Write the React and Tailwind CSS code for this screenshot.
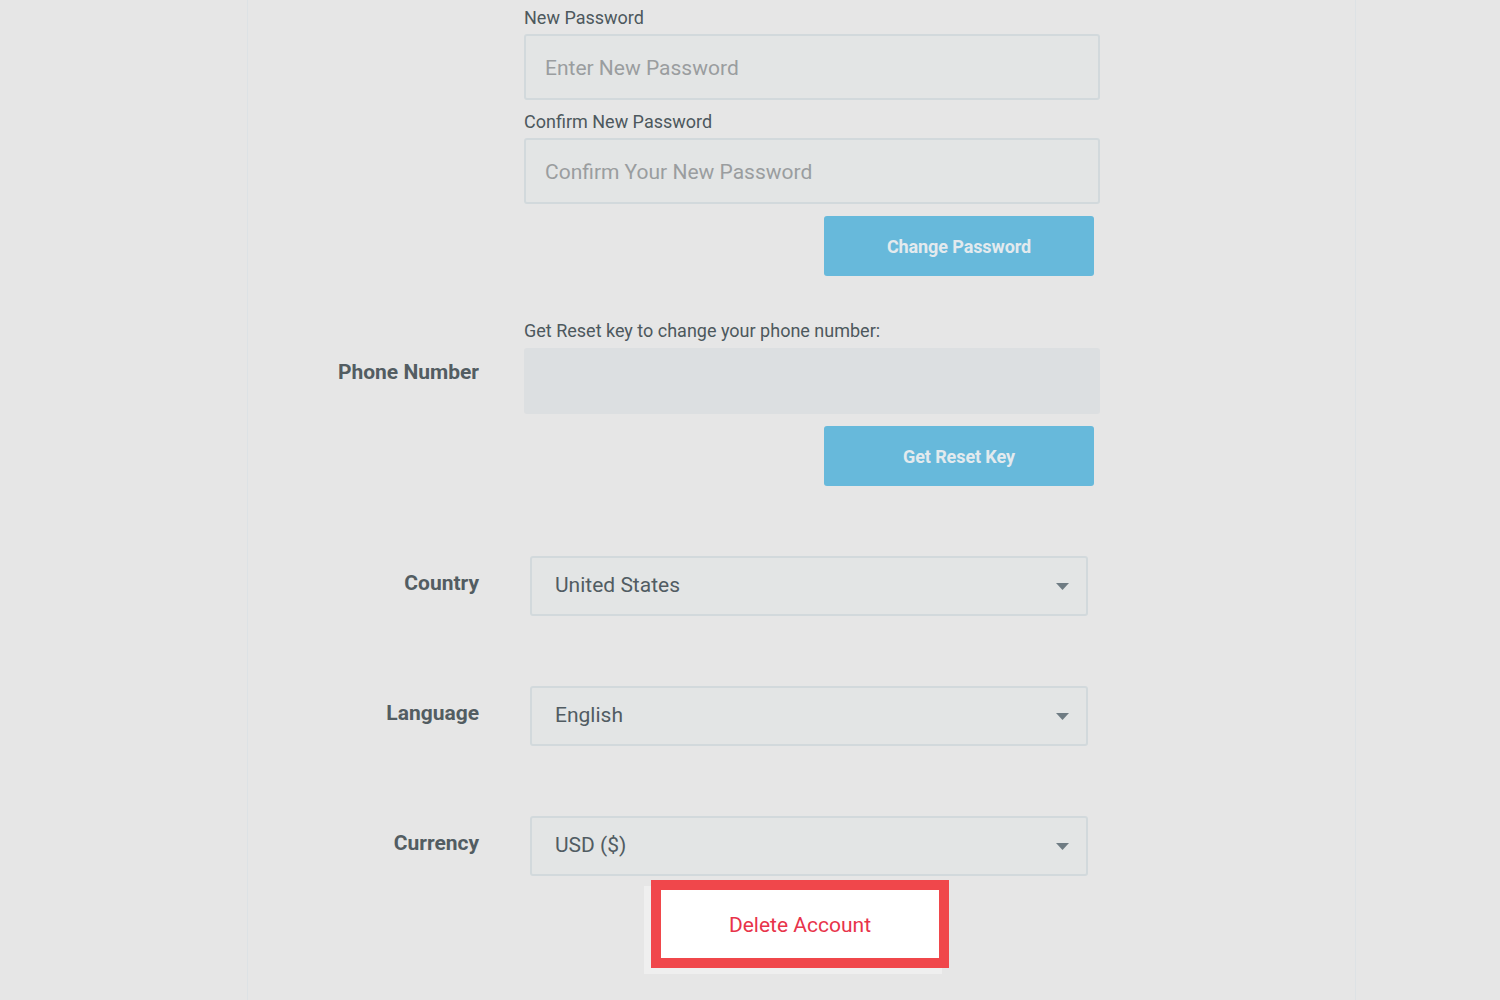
import React from "react";

function Caret() {
  return (
    <svg width="13" height="7" viewBox="0 0 13 7" className="shrink-0">
      <path d="M0 0 H13 L6.5 7 Z" fill="#6f7c83" />
    </svg>
  );
}

function SelectBox({ value }) {
  return (
    <div className="ml-[51px] w-[558px] h-[60px] border-2 border-[#d2d9dc] rounded-[3px] bg-[#e3e5e5] flex items-center justify-between pl-[23px] pr-[17px]">
      <span className="text-[21px] text-[#515c62]">{value}</span>
      <Caret />
    </div>
  );
}

function SelectRow({ label, value, className = "" }) {
  return (
    <div className={"flex " + className}>
      <div className="w-[231px] text-right text-[21px] font-bold leading-[24px] text-[#535d62] pt-[15px]">
        {label}
      </div>
      <SelectBox value={value} />
    </div>
  );
}

export default function App() {
  return (
    <div
      className="min-h-screen w-full bg-[#e6e6e6] overflow-hidden"
      style={{ fontFamily: "Roboto, 'Liberation Sans', sans-serif" }}
    >
      <div className="ml-[247px] w-[1109px] h-[1000px] border-l border-r border-[#dde2e5]">
        {/* Password section */}
        <div className="flex">
          <div className="w-[231px]" />
          <div className="ml-[45px] w-[576px] flex flex-col">
            <div className="mt-[8px] mb-[6px] text-[18px] leading-[20px] text-[#4d585d]">New Password</div>
            <div className="h-[66px] border-2 border-[#d2d9dc] rounded-[3px] bg-[#e3e5e5] flex items-center pl-[19px] pt-[4px]">
              <span className="text-[21px] text-[#9a9d9f]">Enter New Password</span>
            </div>
            <div className="mt-[12px] mb-[6px] text-[18px] leading-[20px] text-[#4d585d]">Confirm New Password</div>
            <div className="h-[66px] border-2 border-[#d2d9dc] rounded-[3px] bg-[#e3e5e5] flex items-center pl-[19px] pt-[4px]">
              <span className="text-[21px] text-[#9a9d9f]">Confirm Your New Password</span>
            </div>
            <div className="mt-[12px] flex justify-end pr-[6px]">
              <div className="w-[270px] h-[60px] rounded-[3px] bg-[#67b9db] flex items-center justify-center text-[18px] font-bold text-[#e3eaee] tracking-[-0.1px]">
                Change Password
              </div>
            </div>
          </div>
        </div>

        {/* Phone section */}
        <div className="flex mt-[45px]">
          <div className="w-[231px] text-right text-[21px] font-bold leading-[24px] text-[#535d62] pt-[39px]">
            Phone Number
          </div>
          <div className="ml-[45px] w-[576px] flex flex-col">
            <div className="mb-[7px] text-[18px] leading-[20px] text-[#4d585d]">Get Reset key to change your phone number:</div>
            <div className="h-[66px] rounded-[3px] bg-[#dcdfe1]" />
            <div className="mt-[12px] flex justify-end pr-[6px]">
              <div className="w-[270px] h-[60px] rounded-[3px] bg-[#67b9db] flex items-center justify-center text-[18px] font-bold text-[#e3eaee] tracking-[-0.1px]">
                Get Reset Key
              </div>
            </div>
          </div>
        </div>

        <SelectRow label="Country" value="United States" className="mt-[70px]" />
        <SelectRow label="Language" value="English" className="mt-[70px]" />
        <SelectRow label="Currency" value="USD ($)" className="mt-[70px]" />

        <div className="flex justify-center mt-[4px] pr-[3px]">
          <div className="w-[298px] h-[88px] border-[10px] border-[#f0474b] bg-white flex items-center justify-center pt-[3px] shadow-[-7px_6px_0_#efefef]">
            <span className="text-[21px] text-[#e8334a]">Delete Account</span>
          </div>
        </div>
      </div>
    </div>
  );
}
